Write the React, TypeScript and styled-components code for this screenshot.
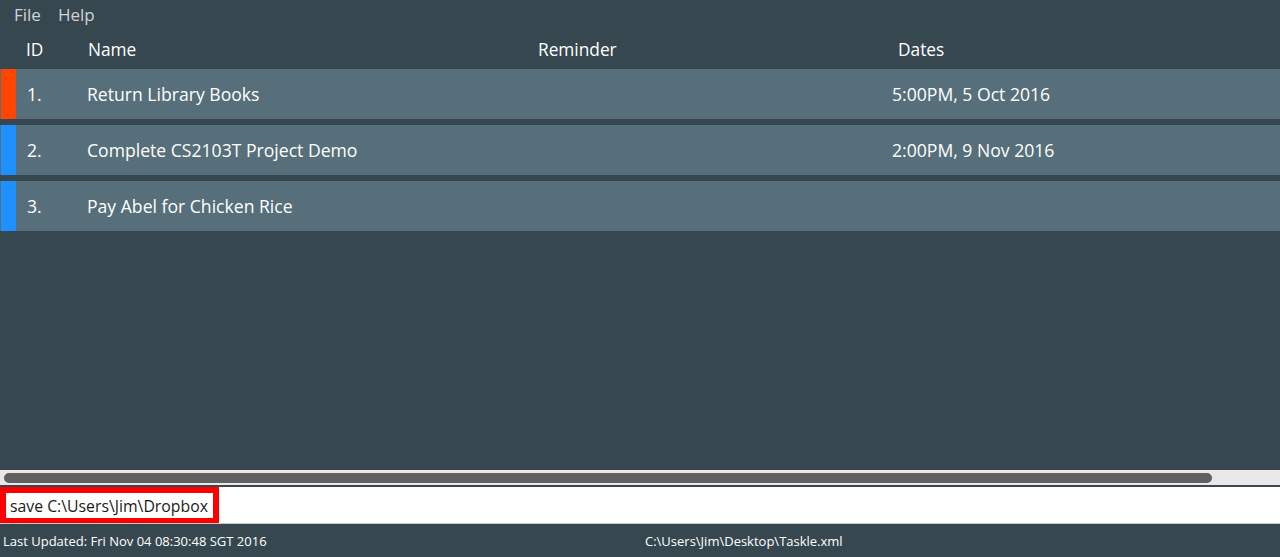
import styled, { createGlobalStyle } from 'styled-components';

const GlobalStyle = createGlobalStyle`
  html, body {
    margin: 0;
    padding: 0;
    background: #37474f;
  }
  * {
    box-sizing: border-box;
  }
`;

type Task = {
  id: number;
  name: string;
  reminder: string;
  date: string;
  color: string;
};

const tasks: Task[] = [
  { id: 1, name: 'Return Library Books', reminder: '', date: '5:00PM, 5 Oct 2016', color: '#ff4500' },
  { id: 2, name: 'Complete CS2103T Project Demo', reminder: '', date: '2:00PM, 9 Nov 2016', color: '#1e90ff' },
  { id: 3, name: 'Pay Abel for Chicken Rice', reminder: '', date: '', color: '#1e90ff' },
];

const Window = styled.div`
  width: 1280px;
  height: 557px;
  display: flex;
  flex-direction: column;
  background: #37474f;
  font-family: 'Open Sans', 'Noto Sans', sans-serif;
  color: #ffffff;
  overflow: hidden;
`;

const MenuBar = styled.div`
  height: 29px;
  display: flex;
  align-items: center;
  gap: 17px;
  padding-left: 14px;
  font-size: 17px;
  color: #cfd3d5;
`;

const MenuItem = styled.span`
  line-height: 1;
`;

const TablePanel = styled.div`
  flex: 1;
  display: flex;
  flex-direction: column;
`;

const HeaderRow = styled.div`
  height: 40px;
  display: grid;
  grid-template-columns: 88px 450px 360px 1fr;
  align-items: center;
  font-size: 17.3px;
`;

const HeaderCell = styled.div<{ $pad?: number }>`
  padding-left: ${({ $pad }) => $pad ?? 0}px;
`;

const Rows = styled.div`
  display: flex;
  flex-direction: column;
  gap: 6px;
`;

const Row = styled.div`
  height: 50px;
  display: flex;
  align-items: stretch;
  background: #566f7a;
  padding-left: 1px;
`;

const Tag = styled.div<{ $color: string }>`
  width: 15px;
  background: ${({ $color }) => $color};
`;

const RowCells = styled.div`
  flex: 1;
  display: grid;
  grid-template-columns: 60px 805px 1fr;
  align-items: center;
  font-size: 17.6px;
  padding-left: 11px;
  padding-bottom: 1px;
`;

const ScrollTrack = styled.div`
  height: 15px;
  margin-top: auto;
  background: #e8e8e8;
  display: flex;
  align-items: center;
  padding: 0 4px;
`;

const ScrollThumb = styled.div`
  width: 1208px;
  height: 10px;
  border-radius: 5px;
  background: #606060;
`;

const CommandArea = styled.div`
  margin-top: 2px;
  height: 37px;
  background: #ffffff;
  border-bottom: 1px solid #c8c8c8;
  display: flex;
  align-items: stretch;
`;

const CommandBox = styled.div`
  border: 6px solid #ff0000;
  border-bottom-width: 5px;
  padding: 0 5px 0 4px;
  display: flex;
  align-items: center;
  font-size: 15.8px;
  color: #1a1a1a;
`;

const StatusBar = styled.div`
  height: 33px;
  display: grid;
  grid-template-columns: 640px 1fr;
  align-items: center;
  font-size: 13px;
  color: #ffffff;
`;

const StatusCell = styled.div<{ $pad: number }>`
  padding-left: ${({ $pad }) => $pad}px;
`;

export default function App() {
  return (
    <Window>
      <GlobalStyle />
      <MenuBar>
        <MenuItem>File</MenuItem>
        <MenuItem>Help</MenuItem>
      </MenuBar>
      <TablePanel>
        <HeaderRow>
          <HeaderCell $pad={26}>ID</HeaderCell>
          <HeaderCell>Name</HeaderCell>
          <HeaderCell>Reminder</HeaderCell>
          <HeaderCell>Dates</HeaderCell>
        </HeaderRow>
        <Rows>
          {tasks.map((task) => (
            <Row key={task.id}>
              <Tag $color={task.color} />
              <RowCells>
                <span>{task.id}.</span>
                <span>{task.name}</span>
                <span>{task.date}</span>
              </RowCells>
            </Row>
          ))}
        </Rows>
        <ScrollTrack>
          <ScrollThumb />
        </ScrollTrack>
      </TablePanel>
      <CommandArea>
        <CommandBox>save C:\Users\Jim\Dropbox</CommandBox>
      </CommandArea>
      <StatusBar>
        <StatusCell $pad={3}>Last Updated: Fri Nov 04 08:30:48 SGT 2016</StatusCell>
        <StatusCell $pad={5}>C:\Users\Jim\Desktop\Taskle.xml</StatusCell>
      </StatusBar>
    </Window>
  );
}
